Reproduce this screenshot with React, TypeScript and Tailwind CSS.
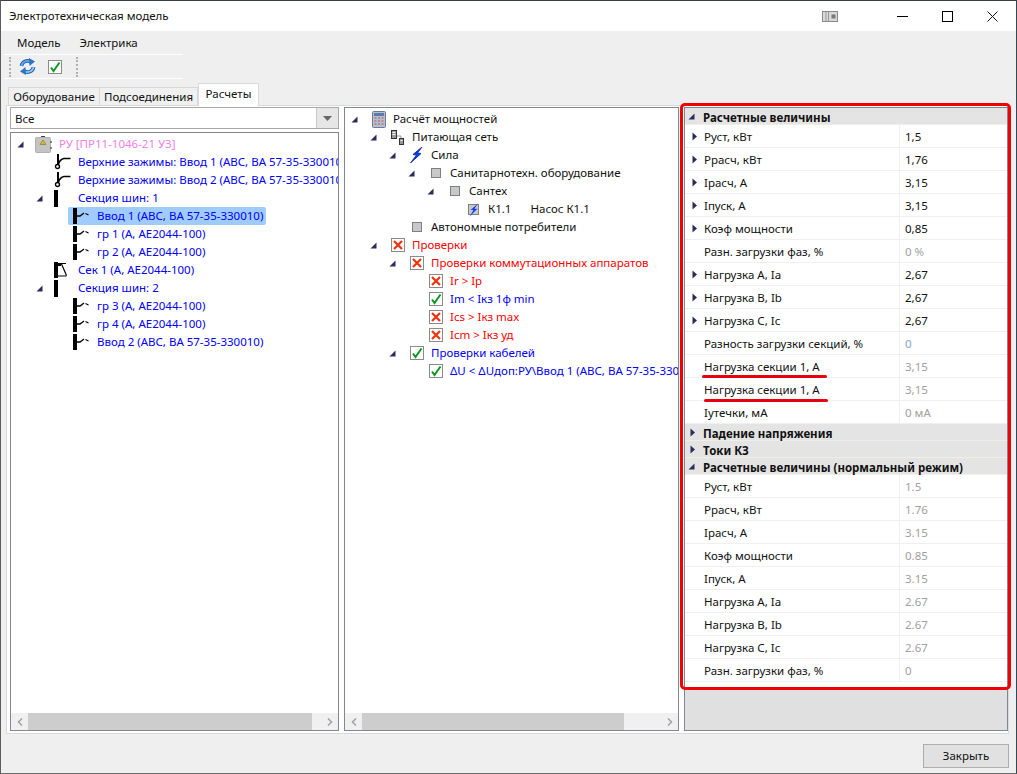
import React from "react";

type IconName = "ru" | "top" | "bus" | "breaker" | "sek" | "calc" | "net" | "bolt" | "square" | "sqbolt" | "x" | "ok";

// Indents by tree level
const indent = ["pl-0", "pl-[19px]", "pl-[38px]", "pl-[57px]", "pl-[76px]", "pl-[95px]"];

const leftTree: { level: number; arrow?: boolean; icon: IconName; text: string; color: string; selected?: boolean }[] = [
  { level: 0, arrow: true, icon: "ru", text: "РУ [ПР11-1046-21 У3]", color: "text-[#f080e8]" },
  { level: 1, icon: "top", text: "Верхние зажимы: Ввод 1 (АВС, ВА 57-35-330010)", color: "text-[#0000ff]" },
  { level: 1, icon: "top", text: "Верхние зажимы: Ввод 2 (АВС, ВА 57-35-330010)", color: "text-[#0000ff]" },
  { level: 1, arrow: true, icon: "bus", text: "Секция шин: 1", color: "text-[#0000ff]" },
  { level: 2, icon: "breaker", text: "Ввод 1 (АВС, ВА 57-35-330010)", color: "text-[#0000ff]", selected: true },
  { level: 2, icon: "breaker", text: "гр 1 (А, АЕ2044-100)", color: "text-[#0000ff]" },
  { level: 2, icon: "breaker", text: "гр 2 (А, АЕ2044-100)", color: "text-[#0000ff]" },
  { level: 1, icon: "sek", text: "Сек 1 (А, АЕ2044-100)", color: "text-[#0000ff]" },
  { level: 1, arrow: true, icon: "bus", text: "Секция шин: 2", color: "text-[#0000ff]" },
  { level: 2, icon: "breaker", text: "гр 3 (А, АЕ2044-100)", color: "text-[#0000ff]" },
  { level: 2, icon: "breaker", text: "гр 4 (А, АЕ2044-100)", color: "text-[#0000ff]" },
  { level: 2, icon: "breaker", text: "Ввод 2 (АВС, ВА 57-35-330010)", color: "text-[#0000ff]" },
];

const midTree: { level: number; arrow?: boolean; icon: IconName; text: string; extra?: string; color: string }[] = [
  { level: 0, arrow: true, icon: "calc", text: "Расчёт мощностей", color: "text-[#111111]" },
  { level: 1, arrow: true, icon: "net", text: "Питающая сеть", color: "text-[#111111]" },
  { level: 2, arrow: true, icon: "bolt", text: "Сила", color: "text-[#111111]" },
  { level: 3, arrow: true, icon: "square", text: "Санитарнотехн. оборудование", color: "text-[#111111]" },
  { level: 4, arrow: true, icon: "square", text: "Сантех", color: "text-[#111111]" },
  { level: 5, icon: "sqbolt", text: "К1.1", extra: "Насос К1.1", color: "text-[#111111]" },
  { level: 2, icon: "square", text: "Автономные потребители", color: "text-[#111111]" },
  { level: 1, arrow: true, icon: "x", text: "Проверки", color: "text-[#ff0000]" },
  { level: 2, arrow: true, icon: "x", text: "Проверки коммутационных аппаратов", color: "text-[#ff0000]" },
  { level: 3, icon: "x", text: "Ir > Ip", color: "text-[#ff0000]" },
  { level: 3, icon: "ok", text: "Im < Iкз 1ф min", color: "text-[#0000ff]" },
  { level: 3, icon: "x", text: "Ics > Iкз max", color: "text-[#ff0000]" },
  { level: 3, icon: "x", text: "Icm > Iкз уд", color: "text-[#ff0000]" },
  { level: 2, arrow: true, icon: "ok", text: "Проверки кабелей", color: "text-[#0000ff]" },
  { level: 3, icon: "ok", text: "ΔU < ΔUдоп:РУ\\Ввод 1 (АВС, ВА 57-35-330010)", color: "text-[#0000ff]" },
];

const mainRows = [
  { name: "Руст, кВт", value: "1,5", arrow: true },
  { name: "Ррасч, кВт", value: "1,76", arrow: true },
  { name: "Iрасч, А", value: "3,15", arrow: true },
  { name: "Iпуск, А", value: "3,15", arrow: true },
  { name: "Коэф мощности", value: "0,85", arrow: true },
  { name: "Разн. загрузки фаз, %", value: "0 %", muted: true },
  { name: "Нагрузка А, Ia", value: "2,67", arrow: true },
  { name: "Нагрузка В, Ib", value: "2,67", arrow: true },
  { name: "Нагрузка С, Ic", value: "2,67", arrow: true },
  { name: "Разность загрузки секций, %", value: "0", blue: true },
  { name: "Нагрузка секции 1, А", value: "3,15", muted: true, mark: "left-[17px] w-[125px] -bottom-[1px]" },
  { name: "Нагрузка секции 1, А", value: "3,15", muted: true, mark: "left-[19px] w-[124px] -bottom-[2px]" },
  { name: "Iутечки, мА", value: "0 мА", muted: true },
];

const normalRows = [
  ["Руст, кВт", "1.5"],
  ["Ррасч, кВт", "1.76"],
  ["Iрасч, А", "3.15"],
  ["Коэф мощности", "0.85"],
  ["Iпуск, А", "3.15"],
  ["Нагрузка А, Ia", "2.67"],
  ["Нагрузка В, Ib", "2.67"],
  ["Нагрузка С, Ic", "2.67"],
  ["Разн. загрузки фаз, %", "0"],
];

function Expanded() {
  return (
    <svg width="7" height="7" viewBox="0 0 7 7">
      <polygon points="6.5,0.5 6.5,6.5 0.5,6.5" fill="#2b2b5e" />
    </svg>
  );
}

function Collapsed() {
  return (
    <svg width="6" height="9" viewBox="0 0 6 9">
      <polygon points="0.5,0.5 5,4.5 0.5,8.5" fill="#2b2b5e" />
    </svg>
  );
}

function Icon({ name }: { name: IconName }) {
  switch (name) {
    case "ru":
      return (
        <svg width="17" height="17" viewBox="0 0 17 17">
          <rect x="0.5" y="1.5" width="15" height="15" rx="1" fill="#c4c4c4" stroke="#b0b0b0" />
          <path d="M6 0.5h4M16 5v2M16 11v2" stroke="#444" strokeWidth="1.2" />
          <polygon points="8,4 11,8.5 5,8.5" fill="#e3b320" stroke="#7d6f2c" strokeWidth="0.6" />
        </svg>
      );
    case "top":
      return (
        <svg width="18" height="16" viewBox="0 0 18 16">
          <path d="M4 0v10" stroke="#000" strokeWidth="2" />
          <circle cx="3.5" cy="12.5" r="2" fill="#fff" stroke="#000" strokeWidth="1.4" />
          <path d="M4 11Q6 5 10 4.5h6.5" stroke="#000" strokeWidth="1.7" fill="none" />
        </svg>
      );
    case "bus":
      return <span className="block w-[4px] h-[17px] bg-black" />;
    case "breaker":
      return (
        <svg width="17" height="16" viewBox="0 0 17 16">
          <rect x="0" y="0" width="4" height="16" fill="#000" />
          <path d="M4 8h3l4-3" stroke="#000" strokeWidth="1.3" fill="none" />
          <path d="M12.5 5.5l3 1.5" stroke="#000" strokeWidth="1.2" />
        </svg>
      );
    case "sek":
      return (
        <svg width="14" height="16" viewBox="0 0 14 16">
          <rect x="0" y="0" width="4" height="16" fill="#000" />
          <path d="M4 1h3v3H4z" fill="#000" />
          <path d="M4 1.5h8M7.5 2l5 11.5M4 14h8.5" stroke="#000" strokeWidth="1.2" fill="none" />
        </svg>
      );
    case "calc":
      return (
        <svg width="14" height="17" viewBox="0 0 14 17">
          <rect x="0.5" y="0.5" width="13" height="16" rx="1" fill="#b4c0d2" stroke="#6c7a90" />
          <rect x="2" y="2" width="10" height="3" fill="#5a7ab0" />
          <path d="M2.5 7h2M6 7h2M9.5 7h2M2.5 10h2M6 10h2M9.5 10h2M2.5 13h2M6 13h2M9.5 13h2" stroke="#c0392b" strokeWidth="1.6" strokeOpacity="0.55" />
        </svg>
      );
    case "net":
      return (
        <svg width="13" height="15" viewBox="0 0 13 15">
          <rect x="0.5" y="0.5" width="5" height="8" fill="#999" stroke="#333" />
          <path d="M1.5 2.5h3M1.5 4.5h3" stroke="#eee" />
          <rect x="8.5" y="8.5" width="4" height="6" fill="#999" stroke="#333" />
          <path d="M9.5 10.5h2" stroke="#eee" />
          <path d="M6 6h4v2" stroke="#999" fill="none" />
        </svg>
      );
    case "bolt":
      return (
        <svg width="13" height="16" viewBox="0 0 13 16">
          <polygon points="12,0 3,7.5 6.5,8 0.5,16 11,6.5 7.5,6" fill="#0a3cf0" stroke="#0a2aa8" strokeWidth="0.9" />
        </svg>
      );
    case "square":
      return <span className="block w-[10px] h-[10px] bg-[#c8c8c8] border border-[#7f7f7f]" />;
    case "sqbolt":
      return (
        <span className="relative flex items-center justify-center w-[11px] h-[11px] bg-[#c8c8c8] border border-[#7f7f7f]">
          <svg className="absolute -top-[2px] left-0" width="10" height="14" viewBox="0 0 12 16">
            <polygon points="11,0 2,8 5.5,8 0.5,16 10,6.5 6.5,6.5" fill="#0a3cf0" />
          </svg>
        </span>
      );
    case "x":
      return (
        <svg width="14" height="14" viewBox="0 0 14 14">
          <rect x="0.5" y="0.5" width="13" height="13" fill="#fff" stroke="#8a8a8a" />
          <path d="M3 3l8 8M11 3l-8 8" stroke="#f4300c" strokeWidth="2.2" />
        </svg>
      );
    case "ok":
      return (
        <svg width="14" height="14" viewBox="0 0 14 14">
          <rect x="0.5" y="0.5" width="13" height="13" fill="#fff" stroke="#8a8a8a" />
          <path d="M3 7.5l2.5 3.5L11.5 2.5" stroke="#0a9a1e" strokeWidth="2" fill="none" />
        </svg>
      );
    default:
      return null;
  }
}

function Refresh() {
  return (
    <svg width="17" height="17" viewBox="0 0 17 17">
      <path d="M2.5 8a6 5.5 0 0 1 9.5-4" stroke="#1f5fb0" strokeWidth="3.6" fill="none" />
      <path d="M2.5 8a6 5.5 0 0 1 9.5-4" stroke="#5fa8ec" strokeWidth="1.8" fill="none" />
      <polygon points="10,0 16,3.5 10.5,8" fill="#2c74c8" />
      <path d="M14.5 9a6 5.5 0 0 1-9.5 4" stroke="#1f5fb0" strokeWidth="3.6" fill="none" />
      <path d="M14.5 9a6 5.5 0 0 1-9.5 4" stroke="#8cc6f4" strokeWidth="1.8" fill="none" />
      <polygon points="7,17 1,13.5 6.5,9" fill="#2c74c8" />
    </svg>
  );
}

function Grip() {
  return <span className="w-[2px] h-[20px] border-l-2 border-dotted border-[#b0b0b0]" />;
}

function HScroll({ thumbClass }: { thumbClass: string }) {
  return (
    <div className="mt-auto h-[17px] shrink-0 flex items-stretch bg-[#f0f0f0]">
      <span className="w-[17px] flex items-center justify-center">
        <svg width="6" height="8" viewBox="0 0 6 8">
          <path d="M5 0.5L1.5 4L5 7.5" stroke="#a0a0a0" strokeWidth="1.5" fill="none" />
        </svg>
      </span>
      <span className={`bg-[#cdcdcd] ${thumbClass}`} />
      <span className="flex-1" />
      <span className="w-[17px] flex items-center justify-center">
        <svg width="6" height="8" viewBox="0 0 6 8">
          <path d="M1 0.5L4.5 4L1 7.5" stroke="#a0a0a0" strokeWidth="1.5" fill="none" />
        </svg>
      </span>
    </div>
  );
}

function SectionHeader({ title, open }: { title: string; open: boolean }) {
  return (
    <div className="h-[17px] shrink-0 flex items-center bg-[#e4e4e4] border-b border-[#efefe4] font-bold text-[#111111] whitespace-nowrap">
      <span className="w-[18px] pl-[3px] flex items-center">{open ? <Expanded /> : <span className="pl-[2px] flex"><Collapsed /></span>}</span>
      <span className="pt-[4px]">{title}</span>
    </div>
  );
}

function PropRow({ name, value, arrow, tone, mark }: { name: string; value: string; arrow?: boolean; tone: string; mark?: string }) {
  return (
    <div className="relative h-[23px] shrink-0 flex items-center border-b border-[#f0f0f0]">
      <div className="w-[215px] h-full flex items-center border-r border-[#f0f0f0] text-[#111111]">
        <span className="w-[19px] pl-[7px] flex items-center">{arrow && <Collapsed />}</span>
        <span className="pt-[1px]">{name}</span>
      </div>
      <span className={`pl-[5px] pt-[1px] ${tone}`}>{value}</span>
      {mark && <span className={`absolute h-[3px] rounded-full bg-[#e8000f] ${mark}`} />}
    </div>
  );
}

export default function App() {
  return (
    <div className="w-[1017px] h-[774px] flex flex-col bg-[#efefef] border-l border-b border-t border-r border-l-[#5c5c5c] border-b-[#6a6a6a] border-t-[#3a3f44] border-r-[#2f4a55] text-[11.5px] leading-[16px] font-['Noto_Sans','Open_Sans',sans-serif] overflow-hidden">
      {/* Title bar */}
      <div className="h-[30px] shrink-0 bg-white flex items-center pl-[8px] text-[#111111]">
        <span>Электротехническая модель</span>
        <span className="ml-auto w-[16px] flex items-center mr-[59px]">
          <svg width="16" height="11" viewBox="0 0 16 11">
            <rect x="0.5" y="0.5" width="15" height="10" fill="#d8d8d8" stroke="#8a8a8a" />
            <path d="M4 1v9M6.5 1v9" stroke="#9a9a9a" />
            <rect x="9.5" y="3.5" width="4" height="4" fill="#777" />
          </svg>
        </span>
        <span className="w-[11px] h-[1px] bg-black mr-[34px]" />
        <span className="w-[11px] h-[11px] border border-black mr-[34px]" />
        <svg className="mr-[18px]" width="11" height="11" viewBox="0 0 11 11">
          <path d="M0.5 0.5l10 10M10.5 0.5l-10 10" stroke="#111" strokeWidth="1" />
        </svg>
      </div>

      {/* Menu */}
      <div className="h-[23px] shrink-0 flex items-center pl-[16px] gap-[19px] text-[#111111]">
        <span>Модель</span>
        <span>Электрика</span>
      </div>

      {/* Toolbar */}
      <div className="h-[25px] w-[179px] shrink-0 ml-[3px] flex items-center pl-[5px] border-b border-white border-t">
        <Grip />
        <span className="ml-[8px] flex"><Refresh /></span>
        <span className="ml-[12px] flex"><Icon name="ok" /></span>
        <span className="ml-[14px] flex"><Grip /></span>
      </div>

      {/* Tabs */}
      <div className="h-[26px] shrink-0 flex items-end pl-[7px] pt-[3px] text-[#111111]">
        <span className="h-[18px] w-[92px] flex items-center justify-center bg-[#f0f0f0] border border-b-0 border-[#d9d9d9]">Оборудование</span>
        <span className="h-[18px] w-[98px] flex items-center justify-center bg-[#f0f0f0] border border-l-0 border-b-0 border-[#d9d9d9]">Подсоединения</span>
        <span className="h-[23px] w-[61px] flex items-center justify-center pb-[2px] bg-white border border-b-0 border-[#d9d9d9] -mb-[1px] z-10">Расчеты</span>
      </div>

      {/* Tab body */}
      <div className="h-[629px] w-[1003px] shrink-0 ml-[5px] bg-white border border-[#d9d9d9] pt-[1px] pl-[3px] flex gap-[5px]">
        <div className="w-[329px] h-[624px] flex flex-col gap-[3px]">
          <div className="h-[22px] shrink-0 flex border border-[#a8a8a8] bg-white">
            <span className="flex-1 pl-[4px] pt-[1px] flex items-center text-[#111111]">Все</span>
            <span className="w-[22px] flex items-center justify-center bg-[#e6e6e6] border-l border-[#c8c8c8]">
              <svg width="9" height="5" viewBox="0 0 9 5"><polygon points="0,0 9,0 4.5,5" fill="#666" /></svg>
            </span>
          </div>
          <div className="flex-1 min-h-0 flex flex-col border border-[#828790] pt-[2px] overflow-hidden">
            {leftTree.map((row, i) => (
              <div key={i} className={`h-[18px] shrink-0 flex items-center whitespace-nowrap ${indent[row.level]}`}>
                <span className="w-[19px] shrink-0 flex items-center justify-center">{row.arrow && <Expanded />}</span>
                <span className={`h-[18px] flex items-center pr-[3px] rounded-[2px] ${row.selected ? "bg-[#a0cbfd]" : ""}`}>
                  <span className="w-[29px] shrink-0 flex items-center pl-[5px]"><Icon name={row.icon} /></span>
                  <span className={row.color}>{row.text}</span>
                </span>
              </div>
            ))}
            <HScroll thumbClass="w-[284px]" />
          </div>
        </div>

        <div className="w-[335px] h-[624px] flex flex-col border border-[#828790] pt-[2px] overflow-hidden">
          {midTree.map((row, i) => (
            <div key={i} className={`h-[18px] shrink-0 flex items-center whitespace-nowrap ${indent[row.level]}`}>
              <span className="w-[19px] shrink-0 flex items-center justify-center">{row.arrow && <Expanded />}</span>
              <span className="w-[29px] shrink-0 flex items-center justify-center">
                <Icon name={row.icon} />
              </span>
              <span className={row.color}>{row.text}</span>
              {row.extra && <span className={`ml-[19px] ${row.color}`}>{row.extra}</span>}
            </div>
          ))}
          <HScroll thumbClass="w-[262px]" />
        </div>

        <div className="relative w-[324px] h-[624px] flex flex-col border border-[#828790] bg-white">
          <SectionHeader title="Расчетные величины" open />
          {mainRows.map((row, i) => (
            <PropRow
              key={i}
              name={row.name}
              value={row.value}
              arrow={row.arrow}
              mark={row.mark}
              tone={row.blue ? "text-[#8c9fd0]" : row.muted ? "text-[#a0a0a0]" : "text-[#111111]"}
            />
          ))}
          <SectionHeader title="Падение напряжения" open={false} />
          <SectionHeader title="Токи КЗ" open={false} />
          <SectionHeader title="Расчетные величины (нормальный режим)" open />
          {normalRows.map(([name, value], i) => (
            <PropRow key={i} name={name} value={value} tone="text-[#a0a0a0]" />
          ))}
          <div className="flex-1 mt-[5px] bg-[#e0e0e0] border-t border-[#828790]" />
          {/* red annotation frame */}
          <div className="absolute -left-[5px] -top-[5px] w-[331px] h-[587px] border-[3px] border-[#f00000] rounded-[5px] pointer-events-none" />
        </div>
      </div>

      {/* Footer */}
      <div className="flex-1 flex items-start justify-end pt-[10px] pr-[7px]">
        <button className="w-[86px] h-[24px] bg-[#e1e1e1] border border-[#adadad] text-[#111111]">Закрыть</button>
      </div>
    </div>
  );
}
